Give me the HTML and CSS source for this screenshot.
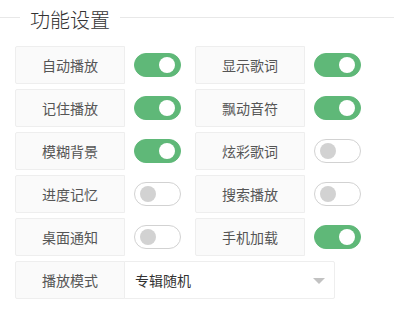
FILE: index.html
```html
<!DOCTYPE html>
<html>
<head>
<meta charset="utf-8">
<link rel="stylesheet" href="styles.css">
</head>
<body>
<div class="panel">
  <div class="title">
    <span class="line short"></span>
    <span class="title-text">功能设置</span>
    <span class="line long"></span>
  </div>
  <div class="grid">
    <div class="item"><div class="label">自动播放</div><span class="switch on"></span></div>
    <div class="item"><div class="label">显示歌词</div><span class="switch on"></span></div>
    <div class="item"><div class="label">记住播放</div><span class="switch on"></span></div>
    <div class="item"><div class="label">飘动音符</div><span class="switch on"></span></div>
    <div class="item"><div class="label">模糊背景</div><span class="switch on"></span></div>
    <div class="item"><div class="label">炫彩歌词</div><span class="switch"></span></div>
    <div class="item"><div class="label">进度记忆</div><span class="switch"></span></div>
    <div class="item"><div class="label">搜索播放</div><span class="switch"></span></div>
    <div class="item"><div class="label">桌面通知</div><span class="switch"></span></div>
    <div class="item"><div class="label">手机加载</div><span class="switch on"></span></div>
    <div class="item wide"><div class="label">播放模式</div><div class="select"><span>专辑随机</span><span class="arrow"></span></div></div>
  </div>
</div>
</body>
</html>
```
FILE: styles.css
```css
html, body {
  margin: 0;
  padding: 0;
  background: #fff;
}
body {
  font-family: "Noto Sans CJK SC", "Noto Sans", sans-serif;
  color: #555;
  width: 394px;
  height: 312px;
  overflow: hidden;
}
.title {
  display: flex;
  align-items: center;
  height: 34px;
  margin-top: 0;
}
.line {
  height: 1px;
  background: #e8e8e8;
}
.line.short { width: 20px; }
.line.long { flex: 1; }
.title-text {
  padding: 0 10px;
  font-size: 20px;
  font-weight: 300;
  color: #333;
  line-height: 28px;
  position: relative;
  top: 3px;
}
.grid {
  display: grid;
  grid-template-columns: 180px 180px;
  row-gap: 5px;
  margin: 12px 0 0 15px;
}
.item {
  display: flex;
  align-items: center;
}
.item.wide { grid-column: 1 / 3; }
.label {
  box-sizing: border-box;
  width: 110px;
  height: 38px;
  border: 1px solid #eee;
  border-radius: 2px 0 0 2px;
  background: #fafafa;
  font-size: 14px;
  line-height: 36px;
  text-align: center;
  color: #555;
}
.switch {
  box-sizing: border-box;
  position: relative;
  width: 47px;
  height: 24px;
  margin-left: 9px;
  border-radius: 12px;
  border: 1px solid #d2d2d2;
  background: #fff;
}
.switch::after {
  content: "";
  position: absolute;
  top: 3px;
  left: 5px;
  width: 16px;
  height: 16px;
  border-radius: 50%;
  background: #d2d2d2;
}
.switch.on {
  border-color: #5fb878;
  background: #5fb878;
}
.switch.on::after {
  left: auto;
  right: 5px;
  background: #fff;
}
.select {
  box-sizing: border-box;
  width: 211px;
  height: 38px;
  margin-left: -1px;
  border: 1px solid #eee;
  border-radius: 0 2px 2px 0;
  background: #fff;
  display: flex;
  align-items: center;
  justify-content: space-between;
  padding: 0 10px 0 10px;
  font-size: 14px;
  color: #333;
}
.arrow {
  width: 0;
  height: 0;
  border-left: 6px solid transparent;
  border-right: 6px solid transparent;
  border-top: 6px solid #c2c2c2;
  margin-right: -1px;
  margin-top: 2px;
}
```
